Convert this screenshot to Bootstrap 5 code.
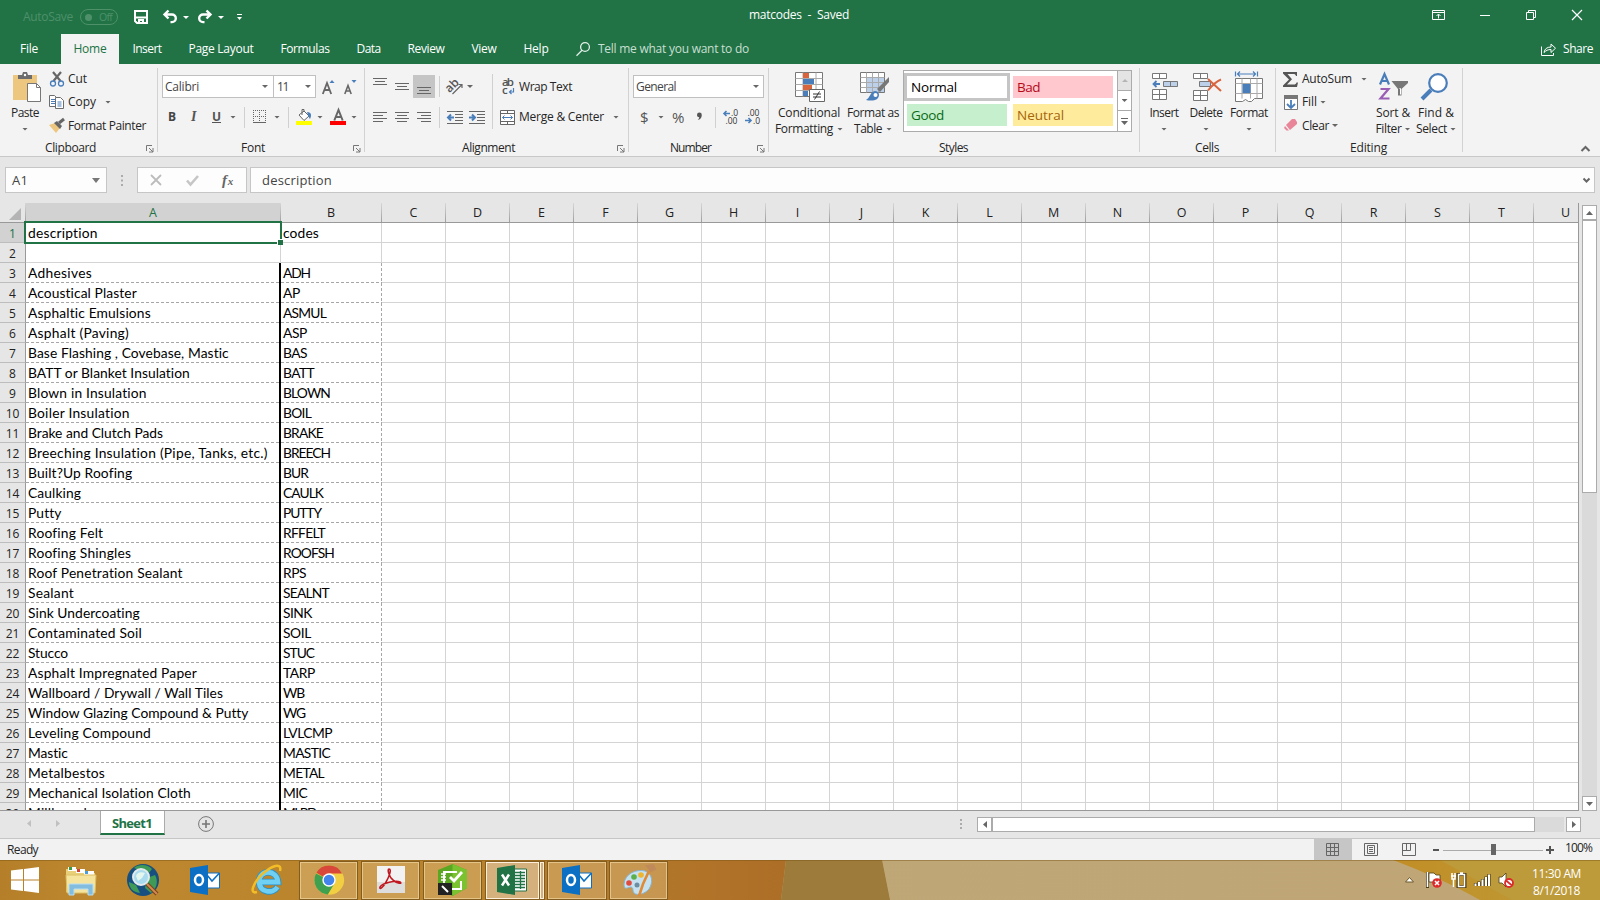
<!DOCTYPE html>
<html lang="en">
<head>
<meta charset="utf-8">
<title>matcodes - Saved</title>
<link href="https://cdn.jsdelivr.net/npm/bootstrap@5.3.0/dist/css/bootstrap.min.css" rel="stylesheet">
<style>
body{width:1600px;height:900px;overflow:hidden;font:12px/16px "Open Sans","Noto Sans",sans-serif;color:#262626;background:#e6e6e6}
svg{display:block;flex:none;overflow:visible}
[data-w],[data-m]{flex:none}
span[data-w]{display:inline-block;white-space:pre}
.titlebar{height:34px;background:#217346;color:#fff}
.tabs-row{height:30px;background:#217346;color:#fff}
.tab-item{height:30px;padding:0 13.5px;display:flex;align-items:center}
.tab-item.on{background:#f3f3f3;color:#217346;padding:0 12.5px}
.toggle-off{width:38px;height:16px;border:1px solid #4d9069;border-radius:8px;font-size:10.5px;line-height:14px;color:#4d9069}
.dim{color:#4d9069}
.ribbon{height:93px;background:#f3f3f3;border-bottom:1px solid #c8c8c8;padding-top:4px}
.group{height:88px;flex:none;background:linear-gradient(#d2d2d2,#d2d2d2) right top/1px 84px no-repeat}
.lane{display:flex;align-items:center;flex:none}
.lh3{height:3px}.lh16{height:16px}.lh22{height:22px}.lh23{height:23px}.lh24{height:24px}.lh37{height:37px}.lh11{height:11px}
.caret{width:6px;height:3px;background:#666;clip-path:polygon(0 0,100% 0,50% 100%);flex:none}
.vsep{width:1px;height:21px;background:#d0d0d0;flex:none}
.vsep.tall{height:55px;margin-top:6px}
.field{height:23px;background:#fff;border:1px solid #c0c0c0;display:flex;align-items:center;flex:none;color:#444}
.big{flex:none;display:flex;flex-direction:column;align-items:center}
.pressed{width:22px;height:23px;background:#c5c5c5;display:flex;align-items:center;justify-content:center;flex:none}
.gallery{width:229px;height:62px;margin-top:2px;border:1px solid #ababab;background:#fff;flex:none}
.swatches{width:213px;display:grid;grid-template-columns:100px 100px;grid-template-rows:22px 22px;gap:6px;padding:5px 3px;font-size:13.5px}
.swatches>div{display:flex;align-items:center;padding:0 0 1px 4px}
.s-normal{background:#fff;color:#000;outline:3px solid #c5c5c5}
.s-bad{background:#ffc7ce;color:#b40a18}.s-good{background:#c6efce;color:#0a6a14}.s-neutral{background:#ffeb9c;color:#a5650a}
.gal-scroll{width:14px;border-left:1px solid #ababab}
.gal-scroll>div{display:flex;align-items:center;justify-content:center;height:20px;border-bottom:1px solid #ababab}
.gal-scroll>div:last-child{border:0}
.formulabar{height:46px;padding:10px 0 0 5px;font-size:13px;color:#444}
.fbox{height:26px;background:#fdfdfd;border:1px solid #c6c6c6;display:flex;align-items:center;flex:none}
.sheetwrap{height:608px}
.sheet{width:1579px;height:608px;overflow:hidden;border-bottom:1px solid #999;border-right:1px solid #999;background:linear-gradient(#e6e6e6 19px,#fff 19px)}
.heads,.srow{display:flex;width:1650px}
.heads{height:20px;border-bottom:1px solid #999;background:#e6e6e6;color:#222}
.heads>div{flex:none;width:64px;text-align:center;line-height:20px;font-size:12.5px;border-right:1px solid;border-image:linear-gradient(#dadada,#9b9b9b) 1}
.heads>.corner,.srow>.rh{width:26px}
.heads>.ca,.srow>.ca{width:255px}
.heads>.cb,.srow>.cb{width:101px}
.heads>.ca{background:#d2d2d2;color:#217346}
.srow{height:20px;font:13.8px/20px Lato,"Open Sans",sans-serif;color:#000}
.srow>div{flex:none;width:64px;height:20px;border-right:1px solid #d4d4d4;border-bottom:1px solid #d4d4d4;padding-left:2px;white-space:pre}
.srow>.rh{background:#e6e6e6;border-right-color:#999;border-bottom-color:#bdbdbd;text-align:center;padding:0;font:12px/21px "Open Sans",sans-serif;color:#222}
.srow>.rh.sel{background:#d2d2d2;color:#217346}
.srow.listed>.ca{border-right:2px solid #000;border-bottom:0;background:repeating-linear-gradient(90deg,#a6a6a6 0 3px,#fff 3px 5px) left bottom/100% 1px no-repeat}
.srow.listed>.cb{border:0;background:repeating-linear-gradient(90deg,#a6a6a6 0 3px,#fff 3px 5px) left bottom/100% 1px no-repeat,repeating-linear-gradient(#a6a6a6 0 3px,#fff 3px 5px) right top/1px 100% no-repeat}
.cursor{position:absolute;left:24px;top:18px;width:258px;height:23px;border:2px solid #217346}
.cursor::after{content:"";position:absolute;right:-3px;bottom:-3px;width:6px;height:6px;background:#217346;border:solid #fff;border-width:1px 0 0 1px}
.vscroll{width:15px;height:606px;margin:2px 3px 0 3px;background:#dadada}
.vscroll .thumb{height:273px}
.sbtn{width:15px;height:15px;background:#fff;border:1px solid #ababab;display:flex;align-items:center;justify-content:center;flex:none}
.thumb{background:#fff;border:1px solid #ababab}
.sheetbar{height:28px;border-bottom:1px solid #c6c6c6}
.sheettab{width:65px;height:25px;margin-top:-1px;background:#fff;border:solid #ababab;border-width:0 1px 0 1px;border-bottom:2px solid #217346;color:#217346;font:bold 13px/26px "Open Sans",sans-serif}
.hscroll{margin-top:6px;background:linear-gradient(#dadada,#dadada) 0 0/587px 15px no-repeat}
.hscroll .thumb{height:15px}
.hscroll .gap{width:29px;height:15px}
.hscroll .gutter{width:2px;height:15px;background:#e6e6e6}
.st1{margin-top:9px}.st2{margin-top:5px}.st3{margin-top:8px}
.status{height:21px;background:#f2f2f2}
.viewon{width:38px;height:21px;background:#c6c6c6}
.taskbar{height:40px;position:relative;color:#fff;z-index:0}
.wall{position:absolute;left:0;top:0;z-index:-1}
.tbtn{height:39px;border:1px solid #835c20;box-shadow:inset 0 0 0 1px rgba(255,235,190,.5);background:rgba(225,190,130,.45);display:flex;align-items:center;justify-content:center;flex:none}
.tbtn.front{background:rgba(240,225,205,.5);box-shadow:inset 0 0 0 1px #fff0dc}
.clock{line-height:17px}
.serif-i{font:italic bold 14px "Liberation Serif",serif;color:#555}
.fx{font:italic bold 15px "Liberation Serif",serif;color:#666}
.fx small{font-size:11px}
.sym{font-size:15px}
</style>
</head>
<body class="d-flex flex-column">

<header class="titlebar lane">
  <span class="dim" data-m="23" data-w="50">AutoSave</span>
  <span class="toggle-off lane" data-m="7"><svg data-m="4" width="7" height="7"><circle cx="3.5" cy="3.5" r="3.5" fill="#4d9069"/></svg><span data-m="7" data-w="13">Off</span></span>
  <svg data-m="16" width="14" height="14" fill="none" stroke="#fff" stroke-width="2"><path d="M1 1h12v12H3L1 11zM1 7.5h12M5 13v-3h4v3"/></svg>
  <svg data-m="15" width="14" height="14" fill="none" stroke="#fff" stroke-width="2.4"><path d="M5.500.5L1.500 4.500l4 4M2 4.500h7a3.800 3.800 0 0 1 0 7.600H7.500"/></svg>
  <svg data-m="6" width="6" height="3" fill="#fff"><path d="M0 0h6L3 3z"/></svg>
  <svg data-m="9" width="14" height="14" fill="none" stroke="#fff" stroke-width="2.4"><path d="M8.500.5l4 4-4 4M12 4.500H5a3.800 3.800 0 0 0 0 7.600h1.500"/></svg>
  <svg data-m="6" width="6" height="3" fill="#fff"><path d="M0 0h6L3 3z"/></svg>
  <svg data-m="13" width="5" height="6" fill="#fff"><path d="M0 0h5v1H0zM0 3h5L2.500 6z"/></svg>
  <span data-m="507" data-w="100" class="pb-1">matcodes  -  Saved</span>
  <svg class="mb-1" data-m="583" width="13" height="10" fill="none" stroke="#fff"><path d="M.5.5h12v9H.500zM.5 2.500h12M6.500 8.500v-4M4.500 6l2-2 2 2"/></svg>
  <svg class="mb-1" data-m="35" width="10" height="10"><path d="M0 5.500h10" stroke="#fff"/></svg>
  <svg class="mb-1" data-m="36" width="10" height="10" fill="none" stroke="#fff"><path d="M.5 2.500h7v7h-7zM2.500 2.500v-2h7v7h-2"/></svg>
  <svg class="mb-1" data-m="36" width="10" height="10" stroke="#fff" stroke-width="1.2"><path d="M0 0l10 10M10 0L0 10"/></svg>
</header>

<nav class="tabs-row lane">
  <div class="tab-item" data-m="6.5"><span data-w="18">File</span></div>
  <div class="tab-item on" data-m="9.5"><span data-w="33">Home</span></div>
  <div class="tab-item"><span data-w="29">Insert</span></div>
  <div class="tab-item"><span data-w="65">Page Layout</span></div>
  <div class="tab-item"><span data-w="49">Formulas</span></div>
  <div class="tab-item"><span data-w="24">Data</span></div>
  <div class="tab-item"><span data-w="37">Review</span></div>
  <div class="tab-item"><span data-w="25">View</span></div>
  <div class="tab-item"><span data-w="25">Help</span></div>
  <svg data-m="14" width="14" height="14" fill="none" stroke="#e4f0e8" stroke-width="1.3"><circle cx="9" cy="5" r="4.4"/><path d="M6 8.300L.5 13.800"/></svg>
  <span data-m="8" data-w="151" style="color:#c9dfd1">Tell me what you want to do</span>
  <svg data-m="792" width="15" height="13" fill="none" stroke="#fff"><path d="M.5 3.500v9h12V10M3 9.500C3.500 6 6 4 10 4V1l4.500 4.200L10 9.500v-3C7 6.500 5 7.500 3 9.500z"/></svg>
  <span data-m="7" data-w="30">Share</span>
</nav>

<section class="ribbon d-flex">
  <div class="group" data-w="158">
    <div class="d-flex">
      <div class="big" data-m="5" data-w="40">
        <div class="lane lh37"><svg width="28" height="30" data-m="4"><path d="M0 3h24v25H0z" fill="#edc77f"/><path d="M5 7V3h4l1-3h4l1 3h4v4z" fill="#6d6d6d"/><circle cx="12" cy="3" r="1.2" fill="#fff"/><path d="M14.500 11.500h9l4 4v14h-13z" fill="#fff" stroke="#777"/><path d="M23.500 11.500v4h4" fill="none" stroke="#777"/></svg></div>
        <div class="lane lh16"><span data-w="28">Paste</span></div>
        <div class="lane lh16"><i class="caret"></i></div>
      </div>
      <div>
        <div class="lane lh22"><svg data-m="5" width="14" height="15" fill="none"><path d="M3 0l7.500 9M11 0L3.500 9" stroke="#666" stroke-width="2.2"/><circle cx="3" cy="11.5" r="2.5" stroke="#4a7ebb" stroke-width="1.3"/><circle cx="11" cy="11.5" r="2.5" stroke="#4a7ebb" stroke-width="1.3"/></svg><span data-m="4" data-w="19">Cut</span></div>
        <div class="lane lh24"><svg data-m="4" width="15" height="14" fill="#fff" stroke="#6d6d6d"><path d="M.5.5h5l3 3v8h-8z"/><path d="M2 4.500h4M2 6.500h4M2 8.500h4" stroke="#4a7ebb"/><path d="M6.500 2.500h5l3 3v8h-8z"/><path d="M8.500 7h4M8.500 9h4M8.500 11h4" stroke="#4a7ebb"/></svg><span data-m="4" data-w="28">Copy</span><i class="caret" data-m="9"></i></div>
        <div class="lane lh23"><svg data-m="4" width="16" height="14"><path d="M0 6l6-2 5 5-4 5z" fill="#edc77f"/><path d="M5 4l3-2 5 5-2 3z" fill="#666"/><path d="M10 4l5-4" stroke="#666" stroke-width="3"/></svg><span data-m="3" data-w="78">Format Painter</span></div>
      </div>
    </div>
    <div class="lane lh3"></div>
    <div class="lane lh16"><span data-m="45" data-w="51">Clipboard</span><svg data-m="50" width="7" height="7" stroke="#777" fill="none"><path d="M.5 6V.5H6M3 3l4 4M7 3v4H3"/></svg></div>
  </div>

  <div class="group" data-w="207">
    <div class="lane lh37">
      <div class="field" data-m="4" data-w="112"><span data-m="2" data-w="34">Calibri</span><i class="caret" data-m="63"></i></div>
      <div class="field" data-m="-1" data-w="43"><span data-m="3" data-w="11">11</span><i class="caret" data-m="17"></i></div>
      <svg data-m="6" width="12" height="14"><path d="M.8 14L5 3l4.200 11M2 10h6" fill="none" stroke="#666" stroke-width="1.8"/><path d="M7.500 3L10 0l2.500 3z" fill="#4a7ebb"/></svg>
      <svg data-m="10" width="12" height="14"><path d="M.8 14L4 5.500 7.200 14M2 11h4.500" fill="none" stroke="#666" stroke-width="1.6"/><path d="M7.500 0L10 3l2.500-3z" fill="#4a7ebb"/></svg>
    </div>
    <div class="lane lh24">
      <b data-m="10" data-w="8" style="color:#444">B</b>
      <i class="serif-i" data-m="15" data-w="6">I</i>
      <b class="text-decoration-underline" data-m="15" data-w="9" style="color:#555">U</b>
      <i class="caret" data-m="9"></i><i class="vsep" data-m="8"></i>
      <svg data-m="8" width="14" height="14" fill="none" stroke="#666"><path d="M.5 0v12M6.500 0v12M12.500 0v12M0 .5h13M0 6.500h13" stroke-dasharray="1 1"/><path d="M0 12.500h13"/></svg>
      <i class="caret" data-m="7"></i><i class="vsep" data-m="8"></i>
      <svg data-m="7" width="16" height="16"><path d="M3 6l5-4 5 5-5 4.500z" fill="#fff" stroke="#666"/><path d="M6 6V.5h2V3" fill="none" stroke="#666"/><path d="M11 3c5 0 4.500 4 3 7-1-1-2-4-3-7z" fill="#4a7ebb"/><path d="M0 12h16v4H0z" fill="#ff0"/></svg>
      <i class="caret" data-m="5"></i>
      <svg data-m="7" width="16" height="16"><path d="M4.300 11.500L8.500 1l4.200 10.500M5.500 8h6" fill="none" stroke="#666" stroke-width="2"/><path d="M0 12h16v4H0z" fill="red"/></svg>
      <i class="caret" data-m="5"></i>
    </div>
    <div class="lane lh11"></div>
    <div class="lane lh16"><span data-m="83" data-w="24">Font</span><svg data-m="88" width="7" height="7" stroke="#777" fill="none"><path d="M.5 6V.5H6M3 3l4 4M7 3v4H3"/></svg></div>
  </div>

  <div class="group" data-w="264">
    <div class="d-flex">
      <div data-w="127">
        <div class="lane lh37">
          <svg data-m="8" width="14" height="17" stroke="#666"><path d="M0 .5h14M2 3.500h10M0 6.500h14"/></svg>
          <svg data-m="8" width="14" height="9" stroke="#666"><path d="M0 1.500h14M2 4.500h10M0 7.500h14"/></svg>
          <div class="pressed" data-m="4"><svg width="14" height="17" stroke="#666"><path d="M0 9.500h14M2 12.500h10M0 15.500h14"/></svg></div>
          <i class="vsep" data-m="4"></i>
          <svg data-m="7" width="16" height="16"><text x="-1" y="10" transform="rotate(-45 6 8)" font-size="12" font-weight="600" fill="#555">ab</text><path d="M5.500 15L15 5.500M11.500 5.500H15V9" fill="none" stroke="#666" stroke-width="1.2"/></svg>
          <i class="caret" data-m="4"></i>
        </div>
        <div class="lane lh24">
          <svg data-m="8" width="14" height="11" stroke="#666"><path d="M0 .5h14M0 3.500h10M0 6.500h14M0 9.500h10"/></svg>
          <svg data-m="8" width="14" height="11" stroke="#666"><path d="M0 .5h14M2 3.500h10M0 6.500h14M2 9.500h10"/></svg>
          <svg data-m="8" width="14" height="11" stroke="#666"><path d="M0 .5h14M4 3.500h10M0 6.500h14M4 9.500h10"/></svg>
          <i class="vsep" data-m="8"></i>
          <svg data-m="7" width="16" height="13" stroke="#666"><path d="M0 .5h16M8 3.500h8M8 6.500h8M8 9.500h8M0 12.500h16"/><path d="M7 6.500H2M4 3.500l-3 3 3 3" fill="none" stroke="#4a7ebb" stroke-width="2"/></svg>
          <svg data-m="6" width="16" height="13" stroke="#666"><path d="M0 .5h16M8 3.500h8M8 6.500h8M8 9.500h8M0 12.500h16"/><path d="M0 6.500h5M3 3.500l3 3-3 3" fill="none" stroke="#4a7ebb" stroke-width="2"/></svg>
        </div>
      </div>
      <i class="vsep tall"></i>
      <div>
        <div class="lane lh37"><svg data-m="9" width="13" height="16"><text x="0" y="7" font-size="11.5" font-weight="600" fill="#555" textLength="12">ab</text><text x="0" y="15" font-size="11.5" font-weight="600" fill="#555">c</text><path d="M11.500 9v4H8M9.500 11L7.500 13l2 2" fill="none" stroke="#4a7ebb" stroke-width="1.2"/></svg><span data-m="4" data-w="53">Wrap Text</span></div>
        <div class="lane lh24"><svg data-m="7" width="15" height="15" fill="#fff" stroke="#666"><path d="M.5.5h14v14H.500zM.5 3.500h14M.5 11.500h14M7.500.5v3M7.500 11.500v3"/><path d="M2.500 7.500h10M4.500 5.500l-2 2 2 2M10.500 5.500l2 2-2 2" fill="none" stroke="#4a7ebb"/></svg><span data-m="4" data-w="85">Merge &amp; Center</span><i class="caret" data-m="9"></i></div>
      </div>
    </div>
    <div class="lane lh11"></div>
    <div class="lane lh16"><span data-m="97" data-w="53">Alignment</span><svg data-m="102" width="7" height="7" stroke="#777" fill="none"><path d="M.5 6V.5H6M3 3l4 4M7 3v4H3"/></svg></div>
  </div>

  <div class="group" data-w="140">
    <div class="lane lh37"><div class="field" data-m="4" data-w="131"><span data-m="2" data-w="40">General</span><i class="caret" data-m="77"></i></div></div>
    <div class="lane lh24" style="color:#555">
      <span class="sym" data-m="11" data-w="8">$</span><i class="caret" data-m="10"></i>
      <span class="sym" data-m="8" data-w="13">%</span>
      <svg data-m="12" width="5" height="14" fill="#555"><path d="M0 5a2.300 2.300 0 1 1 4.800 0C4.800 8 3 9.500.8 10c1-1 1.400-2 1.400-2.700C1 7.300 0 6.300 0 5z"/></svg>
      <i class="vsep" data-m="13"></i>
      <svg data-m="7" width="15" height="14" font-size="8.5" fill="#333"><path d="M7 3.500H1.500M3.500 1L1 3.500 3.500 6" fill="none" stroke="#4a7ebb" stroke-width="1.6"/><text x="8" y="6">.0</text><text x="2.5" y="13.5">.00</text></svg>
      <svg data-m="7" width="15" height="14" font-size="8.5" fill="#333"><path d="M0 10.500h5.500M3.500 8L6 10.500 3.500 13" fill="none" stroke="#4a7ebb" stroke-width="1.6"/><text x="2.5" y="6">.00</text><text x="8" y="13.5">.0</text></svg>
    </div>
    <div class="lane lh11"></div>
    <div class="lane lh16"><span data-m="41" data-w="41">Number</span><svg data-m="46" width="7" height="7" stroke="#777" fill="none"><path d="M.5 6V.5H6M3 3l4 4M7 3v4H3"/></svg></div>
  </div>

  <div class="group" data-w="371">
    <div class="d-flex">
      <div class="big" data-m="5" data-w="70">
        <div class="lane lh37"><svg width="30" height="30" data-m="2"><path d="M.5.5h27v24H.500z" fill="#fff" stroke="#777"/><path d="M.5 6.500h27M.5 12.500h27M.5 18.500h27M8 .5v24M21 .5v24" stroke="#aaa"/><path d="M8 1h6v5H8zM8 13h9v5H8z" fill="#d9653f"/><path d="M8 7h11v5H8zM8 19h5v5H8z" fill="#4a7ebb"/><path d="M14.500 17.500h15v12h-15z" fill="#fff" stroke="#666"/><path d="M18 22h8M18 25h8M24.500 19.500l-5 8" stroke="#333"/></svg></div>
        <div class="lane lh16"><span data-w="62">Conditional</span></div>
        <div class="lane lh16"><span data-w="58">Formatting</span><i class="caret" data-m="4"></i></div>
      </div>
      <div class="big" data-m="1" data-w="56">
        <div class="lane lh37"><svg width="29" height="29" data-m="3"><path d="M.5.5h24v20H.500z" fill="#fff" stroke="#777"/><path d="M6 6h18v14H6z" fill="#bdd0e9"/><path d="M.5 5.500h24M.5 10.500h24M.5 15.500h24M6.500.5v20M12.500.5v20M18.500.5v20" stroke="#aaa"/><path d="M29 5v5L20 20l-3-3z" fill="#777"/><path d="M6 28c4-2 4-8 9-9 4 0 5 4 3 7s-8 3-12 2z" fill="#4a7ebb"/><circle cx="15.5" cy="23" r="2" fill="#fff"/></svg></div>
        <div class="lane lh16"><span data-w="52">Format as</span></div>
        <div class="lane lh16"><span data-w="28">Table</span><i class="caret" data-m="4"></i></div>
      </div>
      <div class="gallery d-flex" data-m="2">
        <div class="swatches">
          <div class="s-normal"><span data-w="46">Normal</span></div><div class="s-bad"><span data-w="23">Bad</span></div>
          <div class="s-good"><span data-w="33">Good</span></div><div class="s-neutral"><span data-w="47">Neutral</span></div>
        </div>
        <div class="gal-scroll"><div style="background:#e4e4e4"><svg width="6" height="3"><path d="M0 3h6L3 0z" fill="#b5b5b5"/></svg></div><div><i class="caret"></i></div><div><svg width="7" height="7" fill="#666"><path d="M0 0h7v1H0zM0 3h7L3.500 7z"/></svg></div></div>
      </div>
    </div>
    <div class="lane lh3"></div>
    <div class="lane lh16"><span data-m="170" data-w="29">Styles</span></div>
  </div>

  <div class="group" data-w="136">
    <div class="d-flex">
      <div class="big" data-m="4" data-w="40">
        <div class="lane lh37"><svg width="27" height="27" fill="#fff" stroke="#777" data-m="2"><path d="M.5.5h14v5H.500zM7.500.5v5M.5 16.500h14v10H.500zM7.500 16.500v10M.5 21.500h14"/><path d="M11.500 8.500h14v5h-14zM18.500 8.500v5" fill="#bdd0e9"/><path d="M8 11H2M4.500 8L1.500 11l3 3" fill="none" stroke="#4a7ebb" stroke-width="1.8"/></svg></div>
        <div class="lane lh16"><span data-w="29">Insert</span></div><div class="lane lh16"><i class="caret"></i></div>
      </div>
      <div class="big" data-m="2" data-w="40">
        <div class="lane lh37"><svg width="29" height="27" fill="#fff" stroke="#777" data-m="2"><path d="M.5.5h14v5H.500zM7.500.5v5M.5 17.500h14v10H.500zM7.500 17.500v10M.5 22.500h14"/><path d="M6.500 8.500h11v5h-11z" fill="#bdd0e9"/><path d="M15 6l13 12M28 6.500c-5 2-9 6-13 11" fill="none" stroke="#d9653f" stroke-width="2"/></svg></div>
        <div class="lane lh16"><span data-w="33">Delete</span></div><div class="lane lh16"><i class="caret"></i></div>
      </div>
      <div class="big" data-m="3" data-w="40">
        <div class="lane lh37"><svg width="28" height="31" fill="none" stroke="#777"><path d="M.5.5v5M22.500.5v5M2 3h19M5 .5L2.500 3 5 5.500M18 .5L20.500 3 18 5.500" stroke="#4a7ebb" stroke-width="1.2"/><path d="M.5 7.500h27v20h-8l-3 3h-3l-3-2-3 2H.500z" fill="#fff"/><path d="M7 7.500v20M15.500 7.500v20M22 7.500v20M.5 12.500h27M.5 22.500h27" stroke="#aaa"/><path d="M7.500 13h8v9h-8z" fill="#4a7ebb" stroke="none"/></svg></div>
        <div class="lane lh16"><span data-w="38">Format</span></div><div class="lane lh16"><i class="caret"></i></div>
      </div>
    </div>
    <div class="lane lh3"></div>
    <div class="lane lh16"><span data-m="55" data-w="24">Cells</span></div>
  </div>

  <div class="group" data-w="187">
    <div class="d-flex">
      <div data-w="96">
        <div class="lane lh22"><svg data-m="7" width="15" height="15" fill="#555"><path d="M0 0h14v4h-1c-.5-1.500-1-2-3-2H4.500L9 7.200 4 12.500h6.500c2 0 2.500-.5 3-2H15L14 15H0v-1.500l6-6L0 1.500z"/></svg><span data-m="4" data-w="50">AutoSum</span><i class="caret" data-m="9"></i></div>
        <div class="lane lh24"><svg data-m="8" width="14" height="15"><path d="M.5.5h13v14H.500z" fill="#fff" stroke="#777"/><path d="M0 0h14v4H0z" fill="#777"/><path d="M7 5v7M3 9l4 4 4-4" fill="none" stroke="#4a7ebb" stroke-width="1.8"/></svg><span data-m="4" data-w="15">Fill</span><i class="caret" data-m="3"></i></div>
        <div class="lane lh23"><svg data-m="8" width="14" height="13"><path d="M8 0h3l2 3v2L6 11 2 6z" fill="#e98599"/><path d="M1 7l4 4.500H2.500L0 9z" fill="#e98599"/></svg><span data-m="4" data-w="27">Clear</span><i class="caret" data-m="3"></i></div>
      </div>
      <div class="big" data-m="2" data-w="38">
        <div class="lane lh37"><svg width="29" height="27" fill="none"><path d="M1 11.500L5.500 1 10 11.500M2.500 8h6" stroke="#4a7ebb" stroke-width="2.2"/><path d="M1.500 16h8L1.500 25.500h9" stroke="#9a5fb5" stroke-width="2.2"/><path d="M12.500 8H29v2l-6.500 6v6.500h-3.500V16z" fill="#777"/><path d="M20.500 15.500h1v6" stroke="#fff"/></svg></div>
        <div class="lane lh16"><span data-w="34">Sort &amp;</span></div><div class="lane lh16"><span data-w="26">Filter</span><i class="caret" data-m="3"></i></div>
      </div>
      <div class="big" data-m="4" data-w="40">
        <div class="lane lh37"><svg class="me-1" width="27" height="27" fill="none"><path d="M1 26l9-9" stroke="#4a7ebb" stroke-width="4"/><circle cx="17" cy="10" r="8.8" fill="#fff" stroke="#4a7ebb" stroke-width="2.2"/></svg></div>
        <div class="lane lh16"><span data-w="36">Find &amp;</span></div><div class="lane lh16"><span data-w="31">Select</span><i class="caret" data-m="3"></i></div>
      </div>
    </div>
    <div class="lane lh3"></div>
    <div class="lane lh16"><span data-m="74" data-w="37">Editing</span></div>
  </div>
  <svg class="align-self-end mb-1" data-m="118" width="9" height="6" fill="none" stroke="#666" stroke-width="2"><path d="M.5 5l4-4 4 4"/></svg>
</section>

<section class="formulabar d-flex">
  <div class="fbox" data-w="102"><span data-m="6" data-w="16">A1</span><svg data-m="64" width="8" height="5"><path d="M0 0h8L4 5z" fill="#777"/></svg></div>
  <svg data-m="14" class="mt-2" width="2" height="11" fill="#ababab"><path d="M0 0h2v2H0zM0 4.500h2v2H0zM0 9h2v2H0z"/></svg>
  <div class="fbox" data-m="14" data-w="110">
    <svg data-m="12" width="12" height="10" stroke="#bcbcbc" stroke-width="1.8"><path d="M1 0l10 10M11 0L1 10"/></svg>
    <svg data-m="24" width="13" height="11" fill="none" stroke="#c6c6c6" stroke-width="2.6"><path d="M1 5.500l3.500 4L12 1"/></svg>
    <span class="fx" data-m="23" data-w="12">f<small>x</small></span>
  </div>
  <div class="fbox" data-m="3" data-w="1345"><span data-m="11" data-w="70">description</span><svg data-m="1251" width="7" height="5" fill="none" stroke="#666" stroke-width="2"><path d="M.5.500l3 3 3-3"/></svg></div>
</section>

<main class="sheetwrap d-flex position-relative">
  <div class="sheet flex-shrink-0" id="sheet"></div>
  <div class="cursor"></div>
  <div class="vscroll d-flex flex-column flex-shrink-0">
    <div class="sbtn"><svg width="7" height="4"><path d="M0 4h7L3.500 0z" fill="#666"/></svg></div>
    <div class="thumb"></div>
    <div class="sbtn mt-auto"><svg width="7" height="4"><path d="M0 0h7L3.500 4z" fill="#666"/></svg></div>
  </div>
</main>

<section class="sheetbar d-flex align-items-start">
  <svg class="st1" data-m="27" width="4" height="7"><path d="M4 0v7L0 3.500z" fill="#c0c0c0"/></svg>
  <svg class="st1" data-m="25" width="4" height="7"><path d="M0 0v7l4-3.500z" fill="#c0c0c0"/></svg>
  <div class="sheettab" data-m="40"><span data-m="11" data-w="40">Sheet1</span></div>
  <svg class="st2" data-m="33" width="16" height="16" fill="none" stroke="#777"><circle cx="8" cy="8" r="7.4"/><path d="M8 4v8M4 8h8" stroke-width="1.6"/></svg>
  <svg class="st3" data-m="746" width="2" height="10" fill="#ababab"><path d="M0 0h2v2H0zM0 4h2v2H0zM0 8h2v2H0z"/></svg>
  <div class="hscroll d-flex" data-m="15"><div class="sbtn"><svg width="4" height="7"><path d="M4 0v7L0 3.500z" fill="#666"/></svg></div><div class="thumb" data-w="543"></div><div class="gap"></div><div class="gutter"></div><div class="sbtn"><svg width="4" height="7"><path d="M0 0v7l4-3.500z" fill="#666"/></svg></div></div>
</section>

<footer class="status lane">
  <span data-m="7" data-w="31">Ready</span>
  <div class="viewon lane" data-m="1276"><svg data-m="12" width="13" height="13" fill="none" stroke="#666"><path d="M.5.5h12v12H.500zM4.500.5v12M8.500.5v12M.5 4.500h12M.5 8.500h12"/></svg></div>
  <svg data-m="12" width="14" height="13" fill="none" stroke="#666"><path d="M.5.5h13v12H.500zM3.500 2.500h7v8h-7zM5 4.500h4M5 6.500h4M5 8.500h4"/></svg>
  <svg data-m="24" width="14" height="13" fill="none" stroke="#666"><path d="M.5.5h13v12H.500zM.5 7.500h8v-7M4.500.5v7"/></svg>
  <svg data-m="17" width="121" height="12"><path d="M0 6h6M113 6h8M117 2v8" stroke="#555" stroke-width="2"/><path d="M10 6.500h100" stroke="#ababab"/><path d="M58 0h5v11h-5z" fill="#666"/></svg>
  <span class="pb-1" data-m="11" data-w="27">100%</span>
</footer>

<footer class="taskbar lane">
  <svg class="wall" width="1600" height="40">
    <defs><linearGradient id="w1"><stop offset="0" stop-color="#b47f28"/><stop offset=".12" stop-color="#bd8830"/><stop offset=".6" stop-color="#b9822c"/><stop offset="1" stop-color="#ad6e27"/></linearGradient>
    <linearGradient id="w2"><stop offset="0" stop-color="#bea775"/><stop offset="1" stop-color="#c0a677"/></linearGradient>
    <linearGradient id="w3"><stop offset="0" stop-color="#c28e25"/><stop offset="1" stop-color="#bc9c3b"/></linearGradient></defs>
    <path d="M0 0h1600v40H0z" fill="url(#w2)"/><path d="M0 0h786l-5 40H0z" fill="url(#w1)"/><path d="M786 0h96l8 40H781z" fill="#9c7b3b"/><path d="M1393 0h207v40h-120c-28-16-56-28-87-40z" fill="url(#w3)"/><path d="M1440 0h160v40h-88z" fill="#bd9b3a"/><path d="M0 .5h1600" stroke="#7a5515" opacity=".45"/>
  </svg>
  <svg data-m="11" width="28" height="26" fill="#fff"><path d="M0 3.500L12 2v10.500H0zM13 1.900L28 0v12.500H13zM0 13.500h12V24L0 22.500zM13 13.500h15V26l-15-1.900z"/></svg>
  <svg data-m="26" width="32" height="29"><path d="M1 3h12l2 4h15v19H1z" fill="#e9cf78"/><path d="M3 1h8v4H3z" fill="#fff"/><path d="M4 1h3v3H4z" fill="#3a9d3f"/><path d="M11 3h9v4h-9z" fill="#fff"/><path d="M12 3h3v3h-3z" fill="#d5412f"/><path d="M19 5h10v4H19z" fill="#fff"/><path d="M20 5h3v3h-3z" fill="#4a9edb"/><path d="M1 9h30l-1 18H2z" fill="#f5e49e" stroke="#dcc067"/><path d="M4 29V18h24v11h-5v-6H9v6z" fill="#82bddf" stroke="#b8def2"/></svg>
  <svg data-m="30" width="33" height="32"><circle cx="16" cy="16" r="16" fill="#174f80"/><path d="M7 4c6-5 14-3 18 1l-4 5-7-3zM20 14l8-3c4 7 1 14-4 18l-6-5zM2 18l7 3 4 8C6 28 2 24 2 18z" fill="#3f9a58"/><path d="M20 20l10 10" stroke="#7b421c" stroke-width="4"/><path d="M20 20l10 10" stroke="#d08a50" stroke-width="2"/><circle cx="14" cy="13" r="8" fill="#a9dbee" stroke="#e3e9ec" stroke-width="2"/><path d="M9 12c2-5 6-4 9-3l-3 5-4 3z" fill="#e5f6ef"/></svg>
  <svg data-m="30" width="31" height="30"><path d="M17 8h12.500v15H17z" fill="#fff" stroke="#0b6fc4"/><path d="M17 10l5 6 7.500-8" fill="none" stroke="#0b6fc4" stroke-width="1.5"/><path d="M0 3l18-3v30L0 27z" fill="#0b6fc4"/><ellipse cx="9" cy="15" rx="4" ry="5" fill="none" stroke="#fff" stroke-width="2.5"/></svg>
  <svg data-m="31" width="31" height="32" fill="none"><path d="M25.500 23C21 30 8 29 7 18 7 5 25 5 26 18H9" stroke="#2a91c8" stroke-width="6.5"/><path d="M25.500 23C21 30 8 29 7 18 7 5 25 5 26 18H9" stroke="#6fd0f3" stroke-width="4.8"/><path d="M5 28C-5 31 4 14 14 7c8-6 16-8 14 0" stroke="#f2bd27" stroke-width="2.5"/></svg>
  <div class="tbtn" data-m="16" data-w="59"><svg width="30" height="30"><circle cx="15" cy="15" r="14.5" fill="#ddc23d"/><path d="M15 15L2 8.500A14.500 14.500 0 0 0 14 29.500l7-11z" fill="#3fa150"/><path d="M15 15L2.400 7.800A14.500 14.500 0 0 1 28.300 9H15z" fill="#d8473a"/><path d="M15 8.500h13.500A14.500 14.500 0 0 1 14 29.500l7-12z" fill="#f2ce42"/><circle cx="15" cy="15" r="6.7" fill="#fff"/><circle cx="15" cy="15" r="5.3" fill="#4384ec"/></svg></div>
  <div class="tbtn" data-m="3" data-w="59"><svg width="28" height="28"><path d="M0 0h28v27H0z" fill="#f2f2f2"/><path d="M0 16h28v11H0z" fill="#dedede"/><path d="M12 3c3 0 0 8-3 13-3 6-7 8-6 5 2-4 16-7 20-5 3 2-3 2-7-2-4-3-6-11-4-11z" fill="none" stroke="#c01820" stroke-width="1.6"/></svg></div>
  <div class="tbtn" data-m="3" data-w="59"><svg width="29" height="32"><path d="M14.500 0L29 6v18l-14.500 8L0 24V6z" fill="#5ba722"/><path d="M14.500 0L29 6v18l-14.500 8z" fill="#7bc231"/><path d="M23 17v8H6V8h13" fill="none" stroke="#fff" stroke-width="2"/><path d="M12 13l4 4 8-9" fill="none" stroke="#fff" stroke-width="2.8"/><path d="M3 10h5M3 13h5M3 16h5" stroke="#fff" stroke-width="1.3"/><path d="M0 19h14v12H0z" fill="#222"/><path d="M4 22l6 6" stroke="#fff" stroke-width="2"/></svg></div>
  <div class="tbtn front" data-m="3" data-w="55"><svg width="31" height="30"><path d="M17 4h12.500v22H17z" fill="#fff" stroke="#217346"/><path d="M18 7.500h10M18 10.500h10M18 13.500h10M18 16.500h10M18 19.500h10M18 22.500h10M23.500 6v18" stroke="#217346" stroke-width="1.3"/><path d="M0 3l18-3v30L0 27z" fill="#217346"/><path d="M5 9.500l7 11M12 9.500l-7 11" stroke="#fff" stroke-width="2.5"/></svg></div>
  <div class="tbtn front" data-m="-1" data-w="6"></div>
  <div class="tbtn" data-m="2" data-w="60"><svg width="31" height="30"><path d="M17 8h12.500v15H17z" fill="#fff" stroke="#0b6fc4"/><path d="M17 10l5 6 7.500-8" fill="none" stroke="#0b6fc4" stroke-width="1.5"/><path d="M0 3l18-3v30L0 27z" fill="#0b6fc4"/><ellipse cx="9" cy="15" rx="4" ry="5" fill="none" stroke="#fff" stroke-width="2.5"/></svg></div>
  <div class="tbtn" data-m="2" data-w="59"><svg width="32" height="31"><path d="M1 19C2 8 14 4 22 6c8 3 8 12 4 18-4 5-12 7-15 4-2-3 0-5-3-6-3 0-7 4-7-3z" fill="#c6e2f1" stroke="#8ab5cf"/><circle cx="6" cy="18" r="2.8" fill="#e04b3d"/><circle cx="11" cy="12" r="2.8" fill="#5bb04a"/><circle cx="18" cy="10" r="2.8" fill="#efb52d"/><circle cx="14" cy="20" r="2.5" fill="#6d8ea0"/><path d="M16 31l4-12 6-13" fill="none" stroke="#e08a35" stroke-width="2.6"/><path d="M24 1l4 5 4-2-2-4z" fill="#c08a5a" stroke="#c08a5a" stroke-width="2"/></svg></div>
  <svg data-m="737" width="9" height="6" fill="#fff" stroke="#6b5a2a"><path d="M4.500.5L.5 5h8z"/></svg>
  <svg data-m="12" width="16" height="16"><path d="M1.500 0v16" stroke="#4b3c18" stroke-width="3"/><path d="M1.500 0v15" stroke="#fff" stroke-width="1.6"/><path d="M3 1h5l2 2h4v7H3z" fill="#fff" stroke="#4b3c18" stroke-width=".8"/><circle cx="11" cy="11" r="4.8" fill="#dc2b2b"/><path d="M9 9l4 4M13 9l-4 4" stroke="#fff" stroke-width="1.6"/></svg>
  <svg data-m="8" width="16" height="16" fill="none"><path d="M8 2.500h7v12H8z" stroke="#4b3c18" stroke-width="3"/><path d="M8.500 2.500h6v12h-6zM10 1h3M1 4h5M2 1v6h3V1M3.500 7v8" stroke="#fff" stroke-width="1.5"/></svg>
  <svg data-m="8" width="16" height="13"><path d="M1.500 9v3M5 7.500V12M8.500 5v7M12 2.500V12M15 0v12" stroke="#4b3c18" stroke-width="3.2"/><path d="M1.500 9.500v2.500M5 8v4M8.500 5.500V12M12 3V12M15 .5V12" stroke="#fff" stroke-width="2"/></svg>
  <svg data-m="8" width="16" height="16"><path d="M1 5h3l4-4v14l-4-4H1z" fill="#fff" stroke="#4b3c18" stroke-width=".8"/><circle cx="11" cy="11" r="4" fill="#fff" stroke="#dc2b2b" stroke-width="1.8"/><path d="M8 8.500l6 5" stroke="#dc2b2b" stroke-width="1.8"/></svg>
  <div class="clock text-center pt-1" data-m="18"><div><span data-w="49">11:30 AM</span></div><div><span data-w="47">8/1/2018</span></div></div>
</footer>

<script>
// [description, its width, code, its width]
const rows=[["description",70,"codes",36],["",0,"",0],["Adhesives",64,"ADH",27],["Acoustical Plaster",109,"AP",17],["Asphaltic Emulsions",123,"ASMUL",43],["Asphalt (Paving)",101,"ASP",24],["Base Flashing , Covebase, Mastic",201,"BAS",24],["BATT or Blanket Insulation",162,"BATT",31],["Blown in Insulation",119,"BLOWN",47],["Boiler Insulation",102,"BOIL",28],["Brake and Clutch Pads",135,"BRAKE",40],["Breeching Insulation (Pipe, Tanks, etc.)",240,"BREECH",47],["Built?Up Roofing",104,"BUR",25],["Caulking",53,"CAULK",40],["Putty",33,"PUTTY",38],["Roofing Felt",75,"RFFELT",42],["Roofing Shingles",103,"ROOFSH",51],["Roof Penetration Sealant",155,"RPS",23],["Sealant",46,"SEALNT",46],["Sink Undercoating",112,"SINK",29],["Contaminated Soil",114,"SOIL",28],["Stucco",40,"STUC",31],["Asphalt Impregnated Paper",169,"TARP",32],["Wallboard / Drywall / Wall Tiles",195,"WB",21],["Window Glazing Compound & Putty",220,"WG",22],["Leveling Compound",123,"LVLCMP",49],["Mastic",40,"MASTIC",47],["Metalbestos",77,"METAL",41],["Mechanical Isolation Cloth",163,"MIC",24],["Millboard",59,"MLBD",33]];
const esc=s=>s.replace(/&/g,"&amp;");
const cell=(t,w)=>t?`<span data-w="${w}">${esc(t)}</span>`:"";
let out='<div class="heads"><div class="corner"><svg width="25" height="19"><path d="M21 5v12H9z" fill="#b4b4b4"/></svg></div><div class="ca">A</div><div class="cb">B</div>'+[..."CDEFGHIJKLMNOPQRSTU"].map(c=>`<div>${c}</div>`).join("")+"</div>";
rows.forEach((r,i)=>{out+=`<div class="srow${i>1?" listed":""}"><div class="rh${i?"":" sel"}">${i+1}</div><div class="ca">${cell(r[0],r[1])}</div><div class="cb">${cell(r[2],r[3])}</div>${"<div></div>".repeat(19)}</div>`});
document.getElementById("sheet").innerHTML=out;
// Spacing and label widths from the data attributes
document.querySelectorAll("[data-m]").forEach(e=>e.style.marginLeft=e.dataset.m+"px");
document.querySelectorAll("[data-w]").forEach(e=>{
  const w=+e.dataset.w;
  if(/^(SPAN|B|I)$/.test(e.tagName)){const n=e.getBoundingClientRect().width;e.style.letterSpacing=((w-n)/e.textContent.length)+"px";}
  e.style.width=w+"px";
});
</script>
<script src="https://cdn.jsdelivr.net/npm/bootstrap@5.3.0/dist/js/bootstrap.bundle.min.js"></script>
</body>
</html>
